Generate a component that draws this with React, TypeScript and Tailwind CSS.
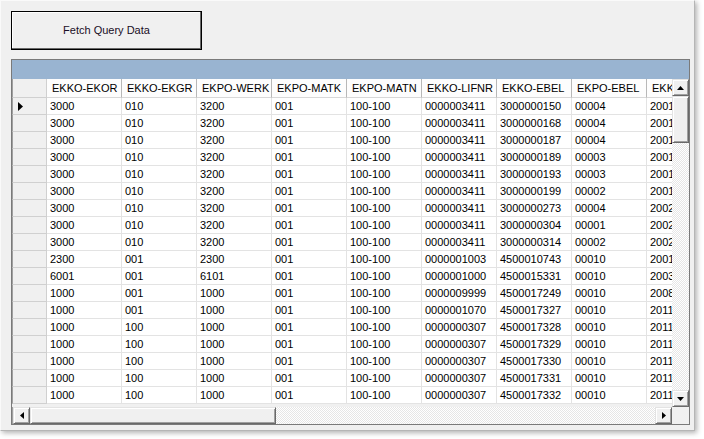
import React from "react";

const cols = ["EKKO-EKOR", "EKKO-EKGR", "EKPO-WERK", "EKPO-MATK", "EKPO-MATN", "EKKO-LIFNR", "EKKO-EBEL", "EKPO-EBEL", "EKKO-BEDAT"];

const rows: string[][] = [
  ["3000", "010", "3200", "001", "100-100", "0000003411", "3000000150", "00004", "20010115"],
  ["3000", "010", "3200", "001", "100-100", "0000003411", "3000000168", "00004", "20010220"],
  ["3000", "010", "3200", "001", "100-100", "0000003411", "3000000187", "00004", "20010311"],
  ["3000", "010", "3200", "001", "100-100", "0000003411", "3000000189", "00003", "20010312"],
  ["3000", "010", "3200", "001", "100-100", "0000003411", "3000000193", "00003", "20010402"],
  ["3000", "010", "3200", "001", "100-100", "0000003411", "3000000199", "00002", "20010515"],
  ["3000", "010", "3200", "001", "100-100", "0000003411", "3000000273", "00004", "20020107"],
  ["3000", "010", "3200", "001", "100-100", "0000003411", "3000000304", "00001", "20020318"],
  ["3000", "010", "3200", "001", "100-100", "0000003411", "3000000314", "00002", "20020422"],
  ["2300", "001", "2300", "001", "100-100", "0000001003", "4500010743", "00010", "20010905"],
  ["6001", "001", "6101", "001", "100-100", "0000001000", "4500015331", "00010", "20030612"],
  ["1000", "001", "1000", "001", "100-100", "0000009999", "4500017249", "00010", "20080221"],
  ["1000", "001", "1000", "001", "100-100", "0000001070", "4500017327", "00010", "20110104"],
  ["1000", "100", "1000", "001", "100-100", "0000000307", "4500017328", "00010", "20110104"],
  ["1000", "100", "1000", "001", "100-100", "0000000307", "4500017329", "00010", "20110104"],
  ["1000", "100", "1000", "001", "100-100", "0000000307", "4500017330", "00010", "20110104"],
  ["1000", "100", "1000", "001", "100-100", "0000000307", "4500017331", "00010", "20110104"],
  ["1000", "100", "1000", "001", "100-100", "0000000307", "4500017332", "00010", "20110104"],
];

const btn3d =
  "bg-[#f0f0f0] border border-t-[#e3e3e3] border-l-[#e3e3e3] border-r-[#696969] border-b-[#696969] shadow-[inset_1px_1px_0_#ffffff,inset_-1px_-1px_0_#a0a0a0] flex items-center justify-center";

const track =
  "bg-[image:repeating-conic-gradient(#ffffff_0%_25%,#e6e6e6_0%_50%)] bg-[length:2px_2px]";

function Tri({ dir }: { dir: "up" | "down" | "left" | "right" }) {
  if (dir === "up")
    return (
      <svg width="7" height="4" viewBox="0 0 7 4"><polygon points="3.5,0 7,4 0,4" fill="#000" /></svg>
    );
  if (dir === "down")
    return (
      <svg width="7" height="4" viewBox="0 0 7 4"><polygon points="0,0 7,0 3.5,4" fill="#000" /></svg>
    );
  if (dir === "left")
    return (
      <svg width="4" height="7" viewBox="0 0 4 7"><polygon points="4,0 4,7 0,3.5" fill="#000" /></svg>
    );
  return (
    <svg width="4" height="7" viewBox="0 0 4 7"><polygon points="0,0 4,3.5 0,7" fill="#000" /></svg>
  );
}

export default function App() {
  return (
    <div className="w-[704px] h-[439px] bg-white font-['Liberation_Sans',Arial,sans-serif] text-[11px] text-black">
      <div className="w-[695px] h-[431px] bg-[#f0f0f0] border-l border-t border-l-[#fafafa] border-t-[#fafafa] border-r border-b border-r-[#b5b5b5] border-b-[#b5b5b5] shadow-[2px_2px_5px_rgba(0,0,0,0.3)] pl-[10px] pt-[10px]">
        <button className="w-[191px] h-[39px] bg-[#f0f0f0] border border-black shadow-[inset_-1px_-1px_0_#696969,inset_1px_1px_0_#ffffff] flex items-center justify-center text-[11px] text-[#1a0e26]">
          Fetch Query Data
        </button>
        <div className="mt-[9px] w-[679px] h-[366px] border border-[#7a7a7a] flex flex-col bg-[#f0f0f0]">
          <div className="h-[19px] bg-[#99b4d1] shrink-0" />
          <div className="flex h-[328px] shrink-0">
            <div className="w-[660px] h-[328px] overflow-hidden flex flex-col bg-[#f0f0f0]">
              {/* header */}
              <div className="flex h-[19px] shrink-0">
                <div className="w-[35px] shrink-0 bg-[#f0f0f0] border-l border-l-[#a0a0a0] border-r border-r-[#d0d0d0] border-b border-b-[#d0d0d0]" />
                {cols.map((c, i) => (
                  <div
                    key={i}
                    className="w-[75px] shrink-0 bg-[#fdfdfd] border-r border-r-[#b8b8b8] border-b border-b-[#d8d8d8] pl-[5px] flex items-center whitespace-nowrap overflow-hidden"
                  >
                    {c}
                  </div>
                ))}
              </div>
              {rows.map((r, ri) => (
                <div key={ri} className="flex h-[17px] shrink-0">
                  <div className="w-[35px] shrink-0 bg-[#f0f0f0] border-l border-l-[#a0a0a0] border-r border-r-[#d0d0d0] border-b border-b-[#d0d0d0] pl-[5px] flex items-center">
                    {ri === 0 && (
                      <svg width="5" height="9" viewBox="0 0 5 9"><polygon points="0,0 5,4.5 0,9" fill="#000" /></svg>
                    )}
                  </div>
                  {r.map((v, ci) => (
                    <div
                      key={ci}
                      className="w-[75px] shrink-0 bg-white border-r border-r-[#e3e3e3] border-b border-b-[#e3e3e3] pl-[3px] flex items-center whitespace-nowrap overflow-hidden"
                    >
                      {v}
                    </div>
                  ))}
                </div>
              ))}
            </div>
            {/* vertical scrollbar */}
            <div className={`w-[17px] h-[328px] flex flex-col ${track}`}>
              <div className={`h-[17px] w-[17px] shrink-0 ${btn3d}`}>
                <Tri dir="up" />
              </div>
              <div className={`h-[47px] w-[17px] shrink-0 ${btn3d}`} />
              <div className="flex-1" />
              <div className={`h-[17px] w-[17px] shrink-0 ${btn3d}`}>
                <Tri dir="down" />
              </div>
            </div>
          </div>
          {/* horizontal scrollbar */}
          <div className="flex h-[17px] shrink-0">
            <div className={`w-[660px] h-[17px] flex border-l border-l-[#a0a0a0] ${track}`}>
              <div className={`w-[17px] h-[17px] shrink-0 ${btn3d}`}>
                <Tri dir="left" />
              </div>
              <div className={`w-[246px] h-[17px] shrink-0 ${btn3d}`} />
              <div className="flex-1" />
              <div className={`w-[17px] h-[17px] shrink-0 ${btn3d}`}>
                <Tri dir="right" />
              </div>
            </div>
            <div className="w-[17px] h-[17px] bg-[#f0f0f0]" />
          </div>
        </div>
      </div>
    </div>
  );
}
